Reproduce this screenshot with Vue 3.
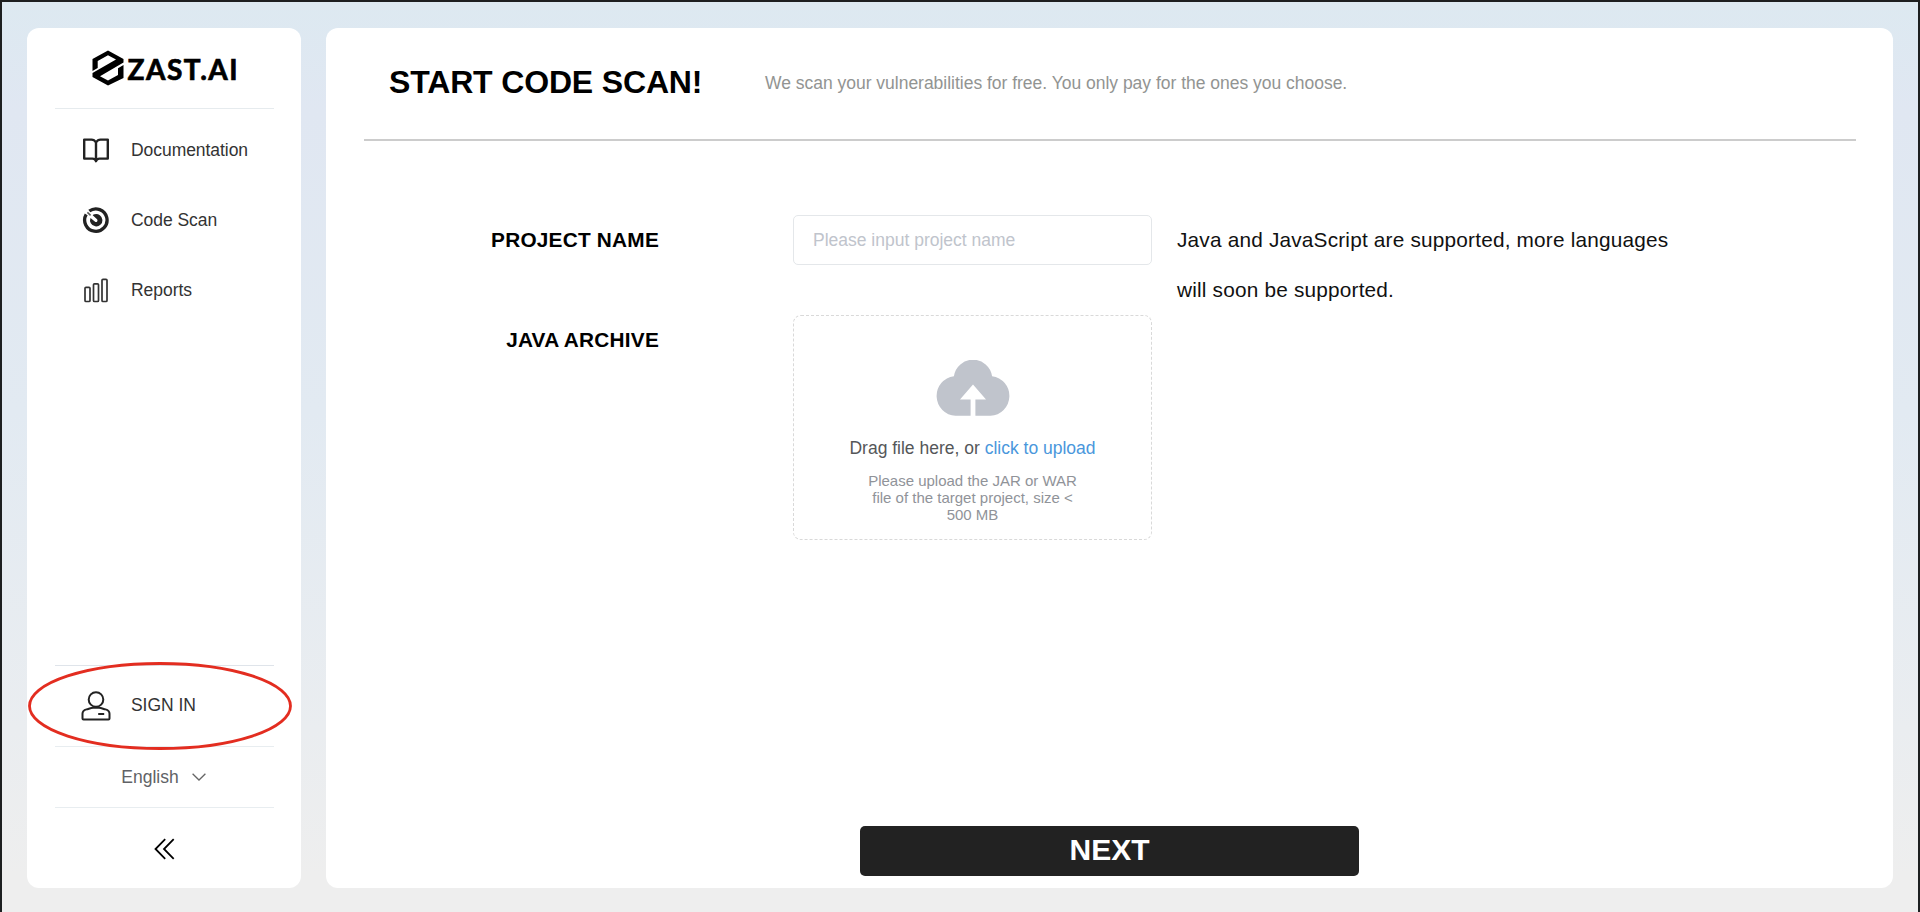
<script setup>
const nav = [
  { id: 'docs', label: 'Documentation' },
  { id: 'scan', label: 'Code Scan' },
  { id: 'reports', label: 'Reports' },
]
</script>

<template>
  <div class="page">
    <aside class="sidebar">
      <div class="brand">
        <svg class="mark" width="32" height="36" viewBox="0 0 32 36">
          <path d="M16 .5 31.500 9v3.500L8 26.300l8 4.300 10-5.600v-6.800l5.500-3.300v13L16 35.500.5 27v-4L24 9.400 16 5.300 5.700 11.100v6.800L.5 21V9z" fill="#000" />
        </svg>
        <span class="word">ZAST.AI</span>
      </div>
      <nav class="nav">
        <a v-for="item in nav" :key="item.id" class="item">
          <span class="glyph">
            <svg v-if="item.id === 'docs'" width="28" height="28" viewBox="0 0 28 28" fill="none" stroke="#222" stroke-width="2.4" stroke-linejoin="round">
              <path d="M14 6.500C12.800 4.500 11.500 3.600 9.500 3.600H2.200v19h8.300c2 0 3 .8 3.500 2.600.5-1.800 1.500-2.600 3.500-2.600h8.300v-19h-7.300c-2 0-3.300.9-4.500 2.900zM14 6.500v18.500" />
            </svg>
            <svg v-else-if="item.id === 'scan'" width="28" height="28" viewBox="0 0 28 28" fill="none" stroke="#222">
              <path d="M4.200 8.400A11.200 11.200 0 1 0 7.300 5" stroke-width="3.300" />
              <path d="M12.500 8.300A6.200 6.200 0 1 1 8.500 11.900L12.800 15.600Q14.200 16.700 15.200 15.400 16.100 14 14.800 13L10.700 9.200Q11.500 8.500 12.500 8.300z" fill="#222" stroke="none" />
              <path d="M5.400 6.400 8.600 9.400" stroke-width="1.500" stroke="#555" />
            </svg>
            <svg v-else width="28" height="28" viewBox="0 0 28 28" fill="none" stroke="#333" stroke-width="1.700">
              <rect x="3" y="11.300" width="5" height="14.200" rx="1" />
              <rect x="11.500" y="7.800" width="5" height="17.700" rx="1" />
              <rect x="20" y="3.300" width="5" height="22.200" rx="1" />
            </svg>
          </span>
          <span>{{ item.label }}</span>
        </a>
      </nav>
      <div class="account">
        <span class="glyph">
          <svg width="30" height="30" viewBox="0 0 30 30" fill="none" stroke="#222" stroke-width="2">
            <circle cx="15" cy="8.500" r="7.300" />
            <path d="M1.500 27.500v-4.800c0-2.400 1.500-3.600 4-4.300 2.900-.8 4.500-1.600 6.500-1.600h6c2 0 3.600.8 6.500 1.600 2.500.7 4 1.900 4 4.300v4.800q0 1-1 1h-25q-1 0-1-1z" />
            <path d="M17.200 23h6" />
          </svg>
        </span>
        <span>SIGN IN</span>
        <svg class="ring" width="264" height="88" viewBox="0 0 264 88">
          <ellipse cx="132" cy="44" rx="130.500" ry="42.500" fill="none" stroke="#e32d20" stroke-width="2.800" />
        </svg>
      </div>
      <div class="lang">
        <span>English</span>
        <svg width="14" height="8" viewBox="0 0 14 8" fill="none" stroke="#666" stroke-width="1.300"><path d="M.6.8 7 7 13.400.8" /></svg>
      </div>
      <div class="collapse">
        <svg width="21" height="22" viewBox="0 0 21 22" fill="none" stroke="#000" stroke-width="1.800"><path d="M11.200 1.200 1.500 11l9.700 9.800M19.700 1.200 10 11l9.700 9.800" /></svg>
      </div>
    </aside>

    <main class="main">
      <header class="head">
        <h1>START CODE SCAN!</h1>
        <p>We scan your vulnerabilities for free. You only pay for the ones you choose.</p>
      </header>
      <section class="form">
        <label class="name">PROJECT NAME</label>
        <div class="field">Please input project name</div>
        <p class="note">Java and JavaScript are supported, more languages<br />will soon be supported.</p>
        <label class="archive">JAVA ARCHIVE</label>
        <div class="drop">
          <svg width="74" height="56" viewBox="0 0 74 56" fill="#c0c4cc">
            <path d="M17.900 16.200A19.300 19.300 0 0 1 56.100 16.200A19.900 19.900 0 0 1 54.500 55.800H39.400V39.500H50L37 24.500 24 39.500H34.600V55.800H19.500A19.900 19.900 0 0 1 17.900 16.200z" />
          </svg>
          <div class="drag">Drag file here, or <em>click to upload</em></div>
          <div class="tip">Please upload the JAR or WAR<br />file of the target project, size &lt;<br />500 MB</div>
        </div>
      </section>
      <button class="next"><span>NEXT</span></button>
    </main>
  </div>
</template>

<style>
body {
  margin: 0;
}
</style>

<style scoped>
.page {
  box-sizing: border-box;
  width: 1920px;
  height: 912px;
  padding: 26px 25px 24px;
  border: 2px solid #1d1f20;
  border-bottom: 0;
  display: flex;
  gap: 25px;
  background: linear-gradient(180deg, #dde9f1 0, #e0e7f2 12%, #e2eaf2 45%, #eaedf0 80%, #eee 96%);
  font-family: "Liberation Sans", Arial, sans-serif;
  overflow: hidden;
}
.sidebar {
  box-sizing: border-box;
  width: 274px;
  height: 860px;
  padding: 0 27px 0 28px;
  border-radius: 12px;
  background: #fff;
  display: flex;
  flex-direction: column;
}
.brand {
  box-sizing: border-box;
  height: 81px;
  padding: 0 0 0 36.500px;
  display: flex;
  align-items: center;
  border-bottom: 1px solid #e6ebee;
}
.mark {
  flex: none;
}
.word {
  margin-left: 4px;
  padding-top: 1px;
  font: 700 28px/36px Lato, sans-serif;
  letter-spacing: 1.500px;
  -webkit-text-stroke: 0.700px #000;
  color: #000;
}
.nav {
  flex: 1;
  padding-top: 6px;
}
.item,
.account {
  display: flex;
  align-items: center;
  height: 70px;
  padding-left: 26px;
  font-size: 17.500px;
  letter-spacing: -0.050px;
  color: #333;
}
.item span:last-child {
  padding-top: 1px;
}
.glyph {
  width: 30px;
  margin-right: 20px;
  display: flex;
  justify-content: center;
}
.account {
  position: relative;
  height: 80px;
  border-top: 1px solid #dfe4ea;
  border-bottom: 1px solid #e8edf0;
}
.account > span {
  margin-bottom: 1px;
}
.ring {
  position: absolute;
  left: -27px;
  top: -4px;
}
.lang {
  height: 60px;
  padding-right: 2px;
  border-bottom: 1px solid #e8edf0;
  display: flex;
  align-items: center;
  justify-content: center;
  gap: 13px;
  font-size: 17.500px;
  color: #606266;
}
.collapse {
  height: 80px;
  padding-top: 1px;
  box-sizing: border-box;
  display: flex;
  align-items: center;
  justify-content: center;
}
.main {
  box-sizing: border-box;
  width: 1567px;
  height: 860px;
  padding: 0 37px 12px 38px;
  border-radius: 12px;
  background: #fff;
  display: flex;
  flex-direction: column;
}
.head {
  box-sizing: border-box;
  height: 113px;
  padding: 0 0 3px 25px;
  display: flex;
  align-items: center;
  border-bottom: 2px solid #ccc;
}
h1 {
  margin: 0;
  width: 376px;
  font-size: 32px;
  line-height: 40px;
  letter-spacing: -0.160px;
  white-space: nowrap;
  color: #000;
}
.head p {
  margin: 0;
  padding-top: 2px;
  font-size: 17.500px;
  letter-spacing: -0.015px;
  color: #929492;
  white-space: nowrap;
}
.form {
  flex: 1;
  padding-top: 74px;
  display: grid;
  grid-template-columns: 295px 359px 1fr;
  grid-template-rows: 100px 225px;
  column-gap: 0;
}
label {
  text-align: right;
  font-size: 20.800px;
  letter-spacing: 0.220px;
  line-height: 50px;
  font-weight: 700;
  color: #000;
}
.field,
.drop {
  margin-left: 134px;
  width: 359px;
  box-sizing: border-box;
}
.field {
  height: 50px;
  padding-left: 19px;
  border: 1.500px solid #e4e7ea;
  border-radius: 5px;
  line-height: 49px;
  font-size: 17.500px;
  color: #c0c4cc;
}
.note {
  margin: 0 0 0 159px;
  font-size: 20.800px;
  letter-spacing: 0.190px;
  line-height: 50px;
  color: #111;
  white-space: nowrap;
}
.drop {
  height: 225px;
  border: 1px dashed #d9d9d9;
  border-radius: 8px;
  padding-top: 44px;
  display: flex;
  flex-direction: column;
  align-items: center;
}
.drag {
  margin-top: 20px;
  font-size: 17.500px;
  line-height: 24px;
  color: #555759;
}
.drag em {
  font-style: normal;
  color: #4a97dc;
}
.tip {
  margin-top: 12px;
  font-size: 15px;
  line-height: 17px;
  text-align: center;
  color: #909399;
}
.next {
  align-self: center;
  width: 499px;
  height: 50px;
  margin-right: 1px;
  padding: 0;
  border: 0;
  border-radius: 5px;
  background: #222;
  color: #fff;
  font: 700 30px/48px "Liberation Sans", Arial, sans-serif;
}
.next span {
  display: block;
  height: 50px;
}
</style>
